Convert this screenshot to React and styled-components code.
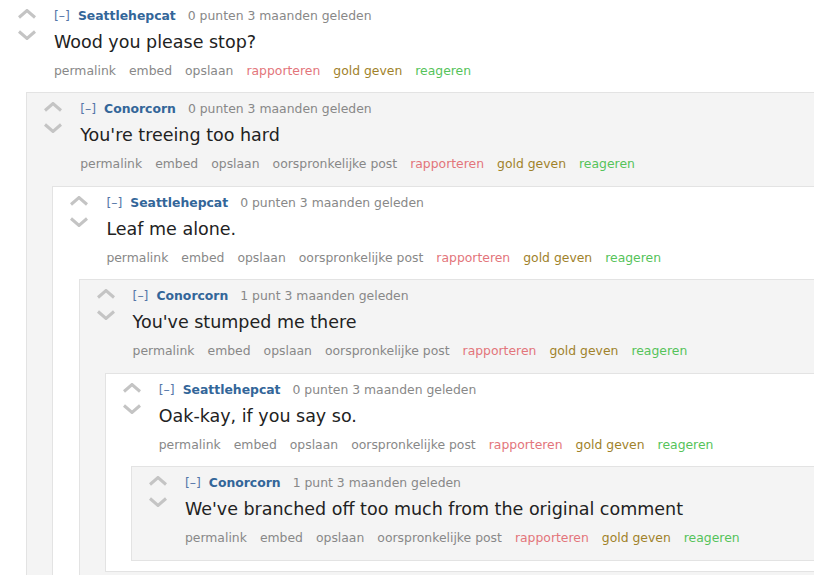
import React from 'react';
import styled, { createGlobalStyle } from 'styled-components';

const GlobalStyle = createGlobalStyle`
  html, body {
    margin:0;
    padding:0;
    background:#fff;
    overflow:hidden;
  }
  body {
    font-family:"DejaVu Sans", Verdana, sans-serif;
  }
`

const Box = styled.div`
  background:${({$depth})=> $depth % 2 ? '#f4f4f4' : '#fff'};
  border-left:1px solid ${({$depth})=> $depth ? '#e3e3e3' : 'transparent'};
  border-top:${({$depth})=> $depth ? '1px solid #e3e3e3' : 'none'};
  border-bottom:${({$depth})=> $depth ? '1px solid #e3e3e3' : 'none'};
  padding-top:${({$depth})=> $depth ? '8px' : '7.5px'};
  margin-bottom:${({$depth})=> $depth ? '10px' : '0'};
`

const Entry = styled.div`
  display:flex;
  padding-bottom:13.5px;
`

const Votes = styled.div`
  display:flex;
  flex-direction:column;
  gap:11px;
  width:20px;
  margin-left:16px;
  padding-top:1px;
`

const Content = styled.div`
  margin-left:17px;
  min-width:0;
`

const Tagline = styled.div`
  display:flex;
  align-items:baseline;
  font-size:12.4px;
  line-height:16px;
  white-space:nowrap;
`

const Expand = styled.span`
  color:#5476a8;
  margin-right:8px;
`

const Author = styled.span`
  color:#336699;
  font-weight:bold;
  margin-right:12px;
`

const Meta = styled.span`
  color:#888;
`

const Body = styled.div`
  margin-top:7px;
  font-size:17.5px;
  line-height:23.5px;
  color:#222;
  white-space:nowrap;
`

const Buttons = styled.ul`
  display:flex;
  gap:13px;
  list-style:none;
  margin:8.5px 0 0;
  padding:0;
  font-size:12.4px;
  line-height:16px;
  white-space:nowrap;
`

const Button = styled.li`
  color:${({$tone})=> $tone === 'report' ? '#e3757b' : $tone === 'gold' ? '#a0822a' : $tone === 'reply' ? '#55c35a' : '#888'};
`

const Children = styled.div`
  margin-left:25.2px;
`

const Arrow = ({down}) => (
  <svg width="20" height="10" viewBox="0 0 20 10">
    <polyline
      points={down ? '2,1.5 10,8.5 18,1.5' : '2,8.5 10,1.5 18,8.5'}
      fill="none"
      stroke="#c4c4c4"
      strokeWidth="3"
      strokeLinejoin="miter"
    />
  </svg>
)

const thread = {
  author:'Seattlehepcat', score:'0 punten', body:'Wood you please stop?',
  reply:{
    author:'Conorcorn', score:'0 punten', body:"You're treeing too hard",
    reply:{
      author:'Seattlehepcat', score:'0 punten', body:'Leaf me alone.',
      reply:{
        author:'Conorcorn', score:'1 punt', body:"You've stumped me there",
        reply:{
          author:'Seattlehepcat', score:'0 punten', body:'Oak-kay, if you say so.',
          reply:{
            author:'Conorcorn', score:'1 punt', body:"We've branched off too much from the original comment",
          }
        }
      }
    }
  }
}

const Comment = ({data, depth}) => {
  const links = [
    {label:'permalink'},
    {label:'embed'},
    {label:'opslaan'},
    ...(depth ? [{label:'oorspronkelijke post'}] : []),
    {label:'rapporteren', tone:'report'},
    {label:'gold geven', tone:'gold'},
    {label:'reageren', tone:'reply'},
  ]
  return (
    <Box $depth={depth}>
      <Entry>
        <Votes>
          <Arrow/>
          <Arrow down/>
        </Votes>
        <Content>
          <Tagline>
            <Expand>[–]</Expand>
            <Author>{data.author}</Author>
            <Meta>{data.score} 3 maanden geleden</Meta>
          </Tagline>
          <Body>{data.body}</Body>
          <Buttons>
            {links.map(l => <Button key={l.label} $tone={l.tone}>{l.label}</Button>)}
          </Buttons>
        </Content>
      </Entry>
      {data.reply && (
        <Children>
          <Comment data={data.reply} depth={depth + 1}/>
        </Children>
      )}
    </Box>
  )
}

const App = () => (
  <>
    <GlobalStyle/>
    <Comment data={thread} depth={0}/>
  </>
)

export default App
